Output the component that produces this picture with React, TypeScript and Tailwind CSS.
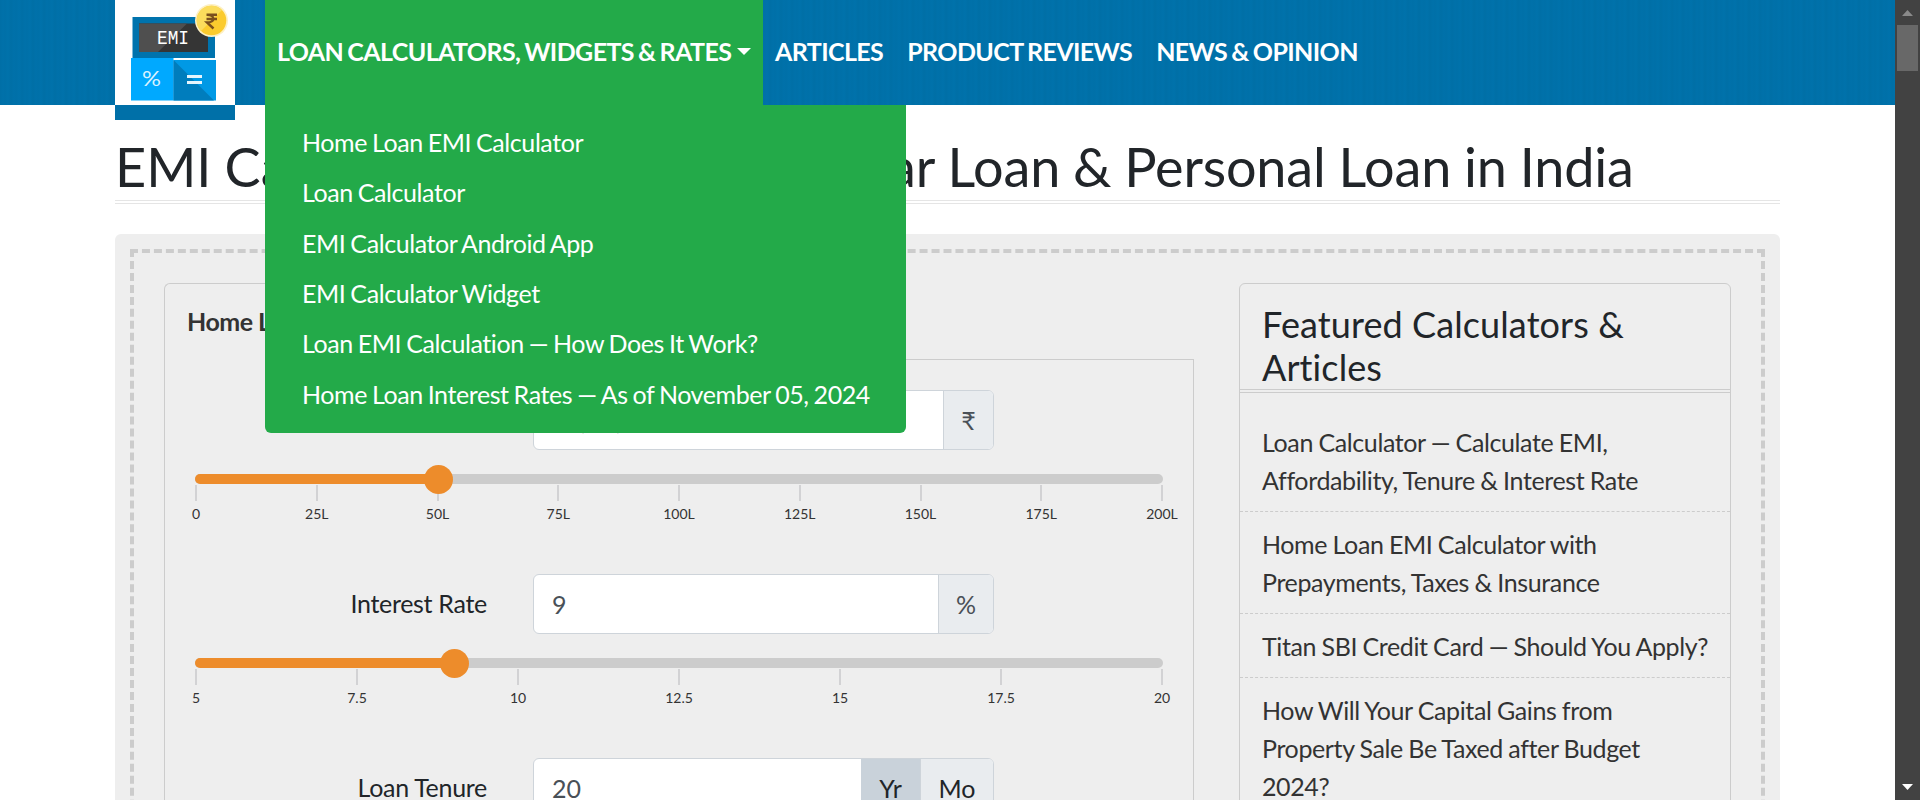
const menuItems = [
  "Home Loan EMI Calculator",
  "Loan Calculator",
  "EMI Calculator Android App",
  "EMI Calculator Widget",
  "Loan EMI Calculation — How Does It Work?",
  "Home Loan Interest Rates — As of November 05, 2024",
];

const articles = [
  "Loan Calculator — Calculate EMI,\nAffordability, Tenure & Interest Rate",
  "Home Loan EMI Calculator with\nPrepayments, Taxes & Insurance",
  "Titan SBI Credit Card — Should You Apply?",
  "How Will Your Capital Gains from\nProperty Sale Be Taxed after Budget\n2024?",
];

function Logo() {
  return (
    <svg viewBox="0 0 120 105" className="block h-[105px] w-[120px] bg-white">
      <path d="M17.500 17H100V58H17.500Z" fill="#0073ad" />
      <path d="M24 23.500H93V52H24Z" fill="#353535" />
      <path d="M24 23.500H72L43 52H24Z" fill="#4f4f4f" />
      <path d="M16 58H58.500V100.500H16Z" fill="#00a9ff" />
      <path d="M58.500 60H101V100.500H58.500Z" fill="#0099e5" />
      <path d="M58.500 60L99 100.500H58.500Z" fill="#007dbd" />
      <circle cx="96.500" cy="20.500" r="16.500" fill="#fdf0c4" />
      <circle cx="96.500" cy="20.500" r="14.800" fill="#fbcb2e" />
      <path d="M86 31A14.800 14.800 0 0 1 107 10Z" fill="#fbdc5c" />
      <path d="M72 75H87V78H72ZM72 81H87V84H72Z" fill="#e6f5fd" />
      <text x="42" y="43.800" fontSize="20" textLength="32" lengthAdjust="spacingAndGlyphs" fontFamily="Liberation Mono" fill="#fff">EMI</text>
      <text x="27" y="86" fontSize="21" textLength="19" lengthAdjust="spacingAndGlyphs" fontFamily="Lato" fill="#d9f2ff">%</text>
      <path d="M91.500 14.800H102M91.500 19H102M92 14.800C100.500 14.800 100.500 22.500 92 22.500L98.500 28.500" fill="none" stroke="#7a4f1d" strokeWidth="2.400" />
    </svg>
  );
}

function Header() {
  return (
    <header className="relative z-10 flex h-[105px] bg-[repeating-linear-gradient(90deg,#006fa6_0px,#0071aa_3px,#0070a8_5px,#0072ab_8px,#006fa6_11px)] pl-[115px]">
      <div className="h-[120px] w-[120px] bg-[#0070a8]">
        <Logo />
      </div>
      <nav className="ml-[30px] flex text-[25px] leading-[103px] font-bold tracking-[-0.6px] whitespace-nowrap text-white [word-spacing:-1.4px]">
        <div className="relative w-[498px] bg-[#23aa49]">
          <a className="flex items-center pl-3">
            LOAN CALCULATORS, WIDGETS &amp; RATES
            <span className="ml-[6px] border-x-[7px] border-t-[7px] border-x-transparent border-t-white" />
          </a>
          <ul className="absolute top-[105px] left-0 h-[328px] w-[641px] rounded-b-md bg-[#23aa49] pt-3 leading-[50.35px] font-normal tracking-[-0.42px] [word-spacing:-1px]">
            {menuItems.map((m) => (
              <li key={m} className="pl-[37px]">{m}</li>
            ))}
          </ul>
        </div>
        <a className="px-3">ARTICLES</a>
        <a className="px-3">PRODUCT REVIEWS</a>
        <a className="px-3">NEWS &amp; OPINION</a>
      </nav>
    </header>
  );
}

function Slider({ ticks, value }: { ticks: string[]; value: number }) {
  return (
    <div className="mx-[30px] mt-6 h-[75px]">
      <div className="relative h-[10px] rounded-full bg-[#ccc]">
        <div className="h-full rounded-full bg-[#ed8c2b]" style={{ width: `${value}%` }} />
        <div className="absolute top-[-9px] -ml-[14.5px] size-[29px] rounded-full bg-[#ed8c2b]" style={{ left: `${value}%` }} />
      </div>
      <div className="mx-px flex justify-between">
        {ticks.map((t) => (
          <div key={t} className="flex w-0 flex-col items-center pt-px">
            <span className="h-4 w-[2px] bg-[#d2d2d4]" />
            <span className="mt-1 text-[14px] leading-[18px] text-[#333]">{t}</span>
          </div>
        ))}
      </div>
    </div>
  );
}

function Row({ label, value, children }: { label: string; value: string; children: React.ReactNode }) {
  return (
    <div className="flex h-[60px] items-center">
      <div className="w-[322px] text-right tracking-[-0.3px] text-[#212529]">{label}</div>
      <div className="ml-[46px] flex h-[60px] w-[461px] overflow-hidden rounded-md border border-[#ced4da] bg-white leading-[58px] text-[#495057]">
        <div className="flex-1 pl-[18px]">{value}</div>
        {children}
      </div>
    </div>
  );
}

function Scrollbar() {
  return (
    <div className="flex h-[800px] w-[25px] flex-col items-center justify-between bg-[#424242]">
      <div className="flex w-full flex-col items-center">
        <svg viewBox="0 0 25 25" className="size-[25px]"><path d="M7 16L12.500 10L18 16Z" fill="#8a8a8a" /></svg>
        <div className="h-[46px] w-[21px] bg-[#686868]" />
      </div>
      <svg viewBox="0 0 25 25" className="size-[25px]"><path d="M7 9L12.500 15L18 9Z" fill="#fff" /></svg>
    </div>
  );
}

export default function App() {
  return (
    <div className="flex h-[800px] w-[1920px] overflow-hidden bg-white font-[Lato,sans-serif] text-[25px]">
      <div className="h-[800px] w-[1895px] overflow-hidden">
        <Header />
        <main className="mx-[115px]">
          <h1 className="h-[99px] border-b-4 border-double border-[#e5e5e5] pt-[29px] text-[54px] leading-[66px] whitespace-nowrap text-[#212529] [word-spacing:-0.7px]">
            EMI Calculator for Home Loan, Car{" "}
            <span className="tracking-[-0.18px]">Loan &amp; Personal Loan in India</span>
          </h1>
          <div className="mt-[30px] h-[900px] rounded-md bg-[#eee] p-[15px]">
            <div className="flex h-[870px] items-start border-4 border-dashed border-[#ccc] pt-[30px] pl-[30px]">
              <section className="w-[1030px]">
                <div className="flex">
                  <div className="h-[77px] w-[210px] rounded-tl-md border-t border-l border-[#ccc] pt-[19px] pl-[22px] leading-9 font-bold tracking-[-0.5px] text-[#333]">
                    Home Loan
                  </div>
                  <div className="flex-1 border-b border-[#ccc]" />
                </div>
                <div className="h-[790px] border-x border-[#ccc] pt-[30px]">
                  <Row label="Home Loan Amount" value="50,00,000">
                    <div className="w-[50px] border-l border-[#ced4da] bg-[#e9ecef] text-center">₹</div>
                  </Row>
                  <Slider ticks={["0", "25L", "50L", "75L", "100L", "125L", "150L", "175L", "200L"]} value={25.15} />
                  <div className="h-[25px]" />
                  <Row label="Interest Rate" value="9">
                    <div className="w-[55px] border-l border-[#ced4da] bg-[#e9ecef] text-center">%</div>
                  </Row>
                  <Slider ticks={["5", "7.5", "10", "12.5", "15", "17.5", "20"]} value={26.8} />
                  <div className="h-[25px]" />
                  <Row label="Loan Tenure" value="20">
                    <div className="w-[59px] bg-[#c9d2da] text-center text-[#212529]">Yr</div>
                    <div className="w-[73px] border-l border-[#ced4da] bg-[#e9ecef] text-center text-[#212529]">Mo</div>
                  </Row>
                </div>
              </section>
              <aside className="ml-[45px] h-[870px] w-[492px] rounded-md border border-[#ccc]">
                <h2 className="h-[109px] border-b-4 border-double border-[#ccc] px-[22px] pt-[19px] text-[36px] leading-[43px] tracking-[0.1px] text-[#212529]">
                  Featured Calculators &amp; Articles
                </h2>
                <ul className="pt-[17px] leading-[38px] tracking-[-0.38px] whitespace-pre text-[#333] [word-spacing:-0.6px]">
                  {articles.map((a) => (
                    <li key={a} className="border-b border-dashed border-[#ccc] pt-[13px] pb-3 pl-[22px]">{a}</li>
                  ))}
                </ul>
              </aside>
            </div>
          </div>
        </main>
      </div>
      <Scrollbar />
    </div>
  );
}
